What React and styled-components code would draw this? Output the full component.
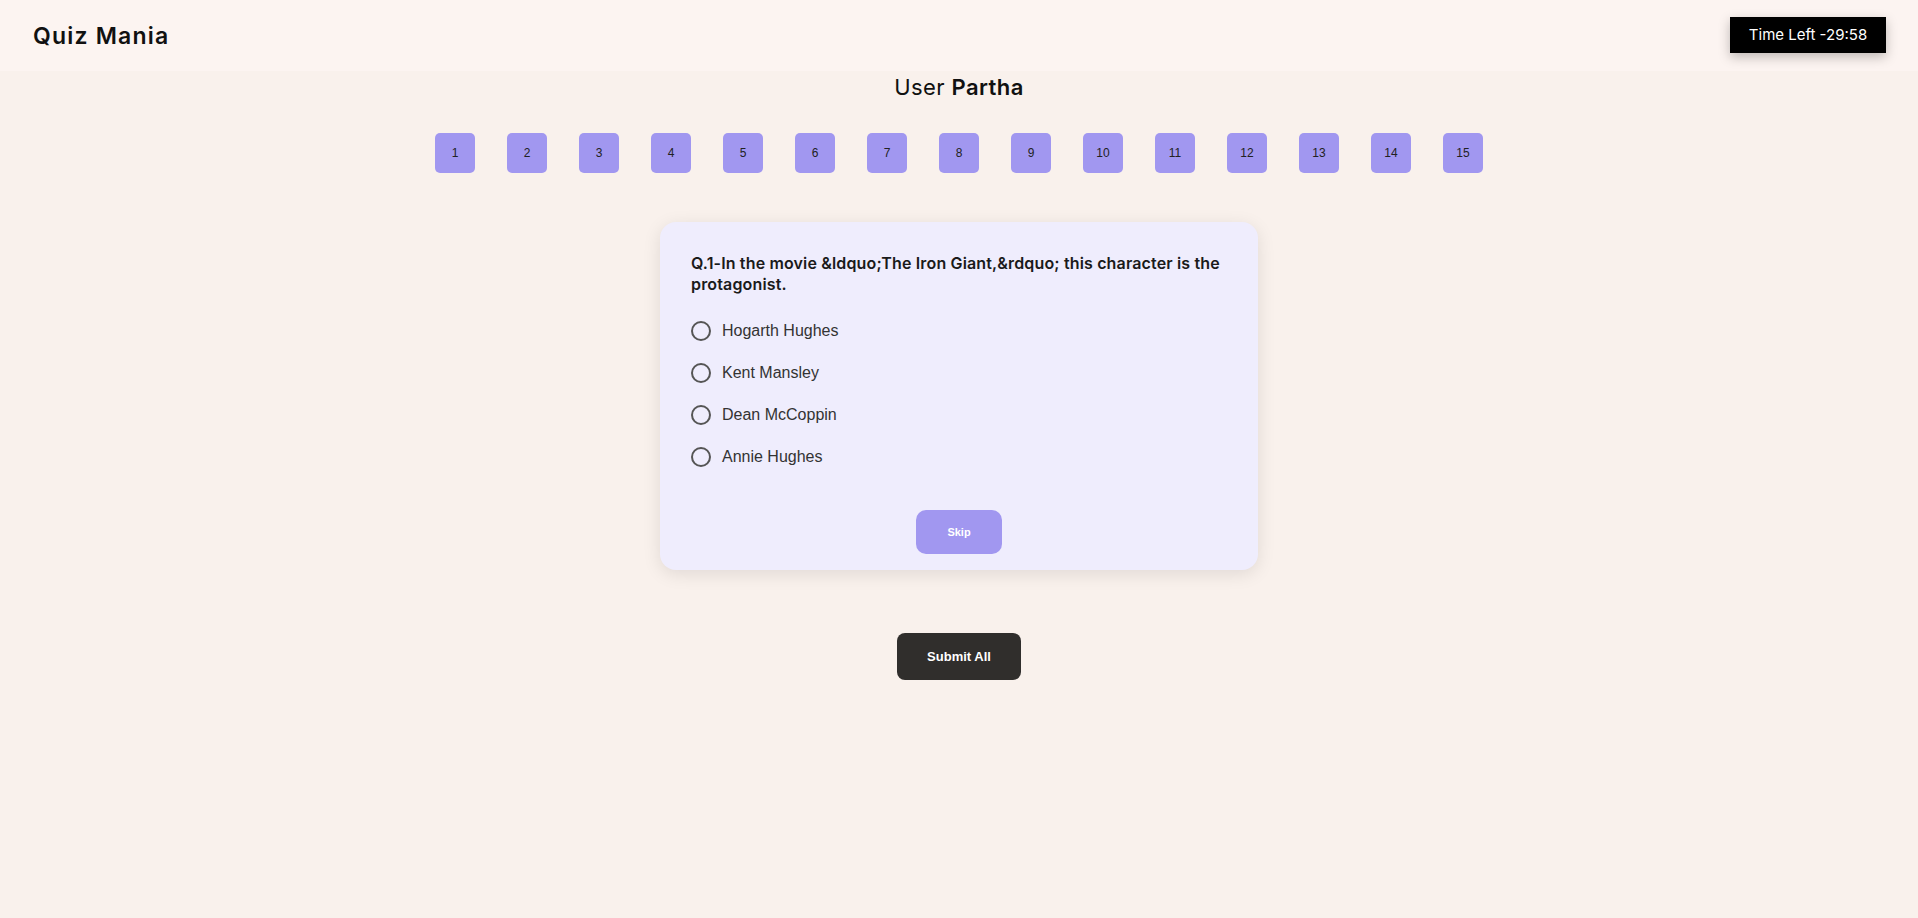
import React, { useState } from 'react';
import styled, { createGlobalStyle } from 'styled-components';

const GlobalStyle = createGlobalStyle`
  * {
    box-sizing: border-box;
  }
  body {
    margin: 0;
    background-color: #f9f1ec;
    font-family: "Liberation Sans", Arial, sans-serif;
  }
`;

const Header = styled.header`
  height: 71px;
  display: flex;
  align-items: center;
  justify-content: space-between;
  padding: 0 32px 0 33px;
  background-color: #fcf4f1;
`;

const Logo = styled.h1`
  margin: 0;
  font-family: Inter, "Noto Sans", sans-serif;
  font-size: 23px;
  font-weight: 600;
  letter-spacing: 1.2px;
  color: #111;
`;

const Timer = styled.div`
  width: 156px;
  height: 36px;
  display: flex;
  align-items: center;
  justify-content: center;
  background-color: #000;
  color: #fff;
  font-family: Inter, "Noto Sans", sans-serif;
  font-size: 15px;
  box-shadow: 0 4px 12px rgba(0, 0, 0, 0.25);
  margin-top: -2px;
`;

const Main = styled.main`
  display: flex;
  flex-direction: column;
  align-items: center;
`;

const UserLine = styled.h2`
  margin: 3px 0 0;
  font-family: Inter, "Noto Sans", sans-serif;
  font-size: 22px;
  font-weight: 400;
  letter-spacing: 0.4px;
  color: #111;

  b {
    font-weight: 600;
  }
`;

const Pager = styled.div`
  display: flex;
  gap: 32px;
  margin-top: 33px;
`;

const PageBox = styled.button`
  width: 40px;
  height: 40px;
  border: none;
  border-radius: 5px;
  background-color: #a197f0;
  color: #222;
  font-family: "Liberation Sans", Arial, sans-serif;
  font-size: 12px;
  cursor: pointer;
`;

const Card = styled.section`
  width: 598px;
  margin-top: 49px;
  padding: 31px 31px 16px;
  background-color: #efedfd;
  border-radius: 16px;
  box-shadow: 0 4px 18px rgba(0, 0, 0, 0.1);
  display: flex;
  flex-direction: column;
`;

const Question = styled.h3`
  margin: 0 0 15px;
  font-family: Inter, "Noto Sans", sans-serif;
  font-size: 16px;
  line-height: 21px;
  font-weight: 600;
  letter-spacing: 0.15px;
  color: #1a1a1a;
`;

const Options = styled.div`
  display: flex;
  flex-direction: column;
`;

const Option = styled.label`
  height: 42px;
  display: flex;
  align-items: center;
  gap: 11px;
  font-size: 16px;
  color: #333;
  cursor: pointer;
`;

const Radio = styled.span`
  width: 20px;
  height: 20px;
  border-radius: 50%;
  border: 2px solid #555;
  display: flex;
  align-items: center;
  justify-content: center;

  &::after {
    content: '';
    width: 10px;
    height: 10px;
    border-radius: 50%;
    background: ${p => (p.$checked ? '#555' : 'transparent')};
  }
`;

const SkipButton = styled.button`
  align-self: center;
  margin-top: 32px;
  width: 86px;
  height: 44px;
  border: none;
  border-radius: 10px;
  background-color: #a197f0;
  color: #fff;
  font-family: "Liberation Sans", Arial, sans-serif;
  font-size: 11px;
  font-weight: 700;
  cursor: pointer;
`;

const SubmitButton = styled.button`
  margin-top: 63px;
  width: 124px;
  height: 47px;
  border: none;
  border-radius: 8px;
  background-color: #302e2c;
  color: #fff;
  font-family: "Liberation Sans", Arial, sans-serif;
  font-size: 13px;
  font-weight: 700;
  cursor: pointer;
`;

const question = 'In the movie &ldquo;The Iron Giant,&rdquo; this character is the protagonist.';
const options = ['Hogarth Hughes', 'Kent Mansley', 'Dean McCoppin', 'Annie Hughes'];

const App = () => {
  const [current, setCurrent] = useState(1);
  const [picked, setPicked] = useState(null);

  return (
    <>
      <GlobalStyle />
      <Header>
        <Logo>Quiz Mania</Logo>
        <Timer>Time Left -29:58</Timer>
      </Header>
      <Main>
        <UserLine>User <b>Partha</b></UserLine>
        <Pager>
          {Array.from({ length: 15 }, (_, i) => (
            <PageBox key={i} onClick={() => setCurrent(i + 1)}>{i + 1}</PageBox>
          ))}
        </Pager>
        <Card>
          <Question>{`Q.${current}-${question}`}</Question>
          <Options>
            {options.map(opt => (
              <Option key={opt} onClick={() => setPicked(opt)}>
                <Radio $checked={picked === opt} />
                {opt}
              </Option>
            ))}
          </Options>
          <SkipButton>Skip</SkipButton>
        </Card>
        <SubmitButton>Submit All</SubmitButton>
      </Main>
    </>
  );
};

export default App;
